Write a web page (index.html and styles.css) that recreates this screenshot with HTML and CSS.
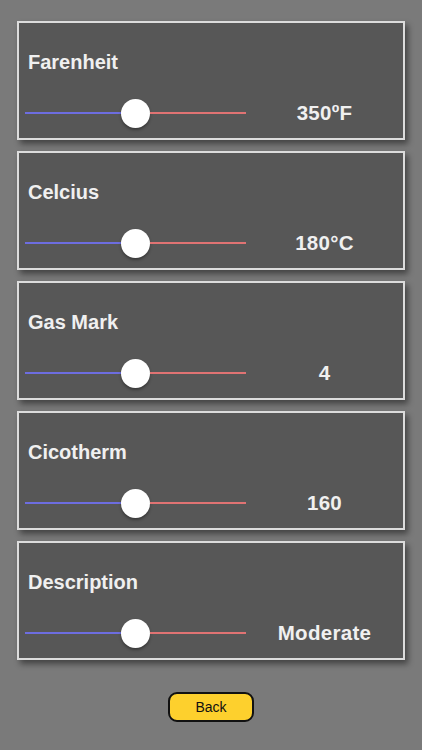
FILE: index.html
```html
<!DOCTYPE html>
<html>
<head>
<meta charset="utf-8">
<link rel="stylesheet" href="styles.css">
</head>
<body>
<main class="page">
  <section class="card">
    <div class="title">Farenheit</div>
    <div class="row">
      <div class="slider"><div class="track-left"></div><div class="thumb"></div><div class="track-right"></div></div>
      <div class="value">350ºF</div>
    </div>
  </section>
  <section class="card">
    <div class="title">Celcius</div>
    <div class="row">
      <div class="slider"><div class="track-left"></div><div class="thumb"></div><div class="track-right"></div></div>
      <div class="value">180°C</div>
    </div>
  </section>
  <section class="card">
    <div class="title">Gas Mark</div>
    <div class="row">
      <div class="slider"><div class="track-left"></div><div class="thumb"></div><div class="track-right"></div></div>
      <div class="value">4</div>
    </div>
  </section>
  <section class="card">
    <div class="title">Cicotherm</div>
    <div class="row">
      <div class="slider"><div class="track-left"></div><div class="thumb"></div><div class="track-right"></div></div>
      <div class="value">160</div>
    </div>
  </section>
  <section class="card">
    <div class="title">Description</div>
    <div class="row">
      <div class="slider"><div class="track-left"></div><div class="thumb"></div><div class="track-right"></div></div>
      <div class="value">Moderate</div>
    </div>
  </section>
  <div class="actions"><button class="back">Back</button></div>
</main>
</body>
</html>
```
FILE: styles.css
```css
html, body {
  margin: 0;
  padding: 0;
  background: #7a7a7a;
  font-family: "Liberation Sans", Arial, sans-serif;
}
.page {
  width: 422px;
  height: 750px;
  box-sizing: border-box;
  padding: 21px 0 0 17px;
  display: flex;
  flex-direction: column;
  gap: 11px;
}
.card {
  width: 388px;
  height: 119px;
  box-sizing: border-box;
  border: 2px solid #dcdcdc;
  background: #575757;
  box-shadow: 3px 4px 6px rgba(0, 0, 0, 0.45);
  padding: 28px 0 11px 0;
  display: flex;
  flex-direction: column;
}
.title {
  margin-left: 9px;
  height: 22px;
  line-height: 22px;
  font-size: 20px;
  font-weight: bold;
  color: #f0f0f0;
}
.row {
  margin-top: 26px;
  height: 28px;
  display: flex;
  align-items: center;
}
.slider {
  margin-left: 6px;
  width: 221px;
  height: 28px;
  display: flex;
  align-items: center;
}
.track-left {
  width: 96px;
  height: 2px;
  background: #6d6de0;
}
.thumb {
  width: 29px;
  height: 29px;
  border-radius: 50%;
  background: #ffffff;
  box-shadow: 0 2px 3px rgba(0, 0, 0, 0.35);
  flex: none;
}
.track-right {
  flex: 1;
  height: 2px;
  background: #e07373;
}
.value {
  flex: 1;
  text-align: center;
  font-size: 20.5px;
  font-weight: bold;
  color: #f0f0f0;
  letter-spacing: 0.3px;
}
.actions {
  margin-top: 21px;
  margin-left: 151px;
  display: flex;
}
.back {
  width: 86px;
  height: 30px;
  box-sizing: border-box;
  border: 2px solid #111;
  border-radius: 9px;
  background: #fdd02d;
  font-family: "Liberation Sans", Arial, sans-serif;
  font-size: 14px;
  color: #111;
  padding: 0;
}
```
